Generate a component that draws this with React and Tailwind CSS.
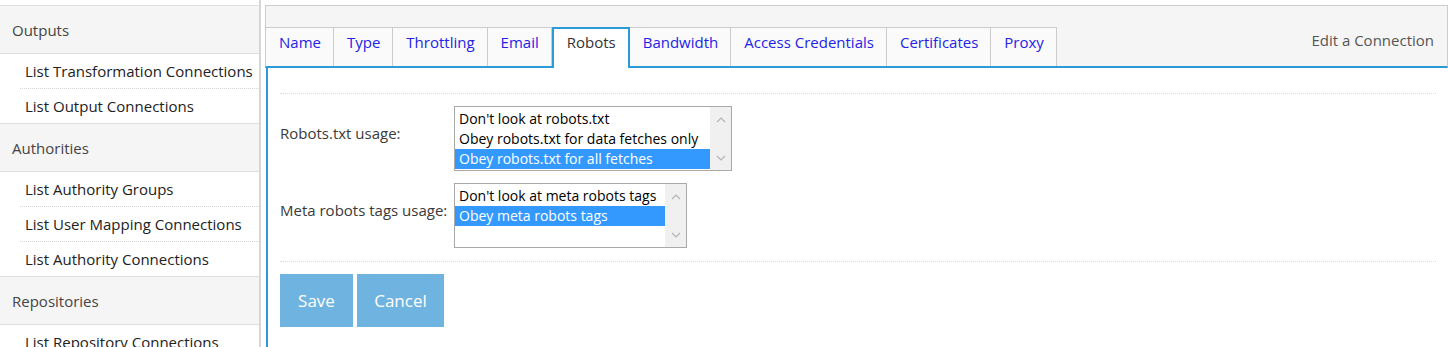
import React from "react";

const groups = [
  { title: "Outputs", items: ["List Transformation Connections", "List Output Connections"] },
  {
    title: "Authorities",
    items: ["List Authority Groups", "List User Mapping Connections", "List Authority Connections"],
  },
  { title: "Repositories", items: ["List Repository Connections"] },
];

const tabs = [
  "Name",
  "Type",
  "Throttling",
  "Email",
  "Robots",
  "Bandwidth",
  "Access Credentials",
  "Certificates",
  "Proxy",
];

function Chevron({ up }) {
  return (
    <svg width="10" height="6" viewBox="0 0 10 6" className="block">
      <polyline
        points={up ? "1,5 5,1 9,5" : "1,1 5,5 9,1"}
        fill="none"
        stroke="#b4b4b4"
        strokeWidth="1.2"
      />
    </svg>
  );
}

function ListBox({ width, options, selected }) {
  return (
    <div className={`flex h-[65px] border border-[#a9a9a9] bg-white ${width}`}>
      <div className="flex-1 pt-[2px]">
        {options.map((o, i) => (
          <div
            key={o}
            className={`h-[20px] pl-[4px] text-[14px] leading-[20px] whitespace-nowrap ${
              i === selected ? "bg-[#3399ff] text-white" : "text-black"
            }`}
          >
            {o}
          </div>
        ))}
      </div>
      <div className="w-[21px] bg-[#f0f0f0] flex flex-col items-center justify-between pt-[10px] pb-[9px]">
        <Chevron up />
        <Chevron />
      </div>
    </div>
  );
}

export default function App() {
  return (
    <div
      className="flex h-[347px] w-[1448px] overflow-hidden bg-white"
      style={{ fontFamily: '"Open Sans", sans-serif' }}
    >
      {/* Sidebar */}
      <aside className="w-[261px] shrink-0 pt-[5px] border-r-2 border-[#d6d6d6]">
        {groups.map((g) => (
          <div key={g.title}>
            <div className="h-[49px] border-y border-[#dedede] bg-[#f5f5f5] pl-[12px] pt-[1px] flex items-center text-[15px] text-[#444]">
              {g.title}
            </div>
            {g.items.map((it, i) => {
              const last = i === g.items.length - 1;
              return (
                <div
                  key={it}
                  className={`ml-[20px] pl-[5px] flex items-center text-[15px] text-[#222] whitespace-nowrap ${
                    last ? "h-[34px]" : "h-[35px] border-b border-dotted border-[#d4d4d4]"
                  }`}
                >
                  {it}
                </div>
              );
            })}
          </div>
        ))}
      </aside>

      {/* Main */}
      <main className="flex-1 ml-[4px] pt-[5px] flex flex-col">
        <div className="flex items-end border-t border-x border-[#cccccc] border-b-2 border-b-[#2b9bd8] bg-[#f5f5f5] pt-[21px]">
          {tabs.map((t) =>
            t === "Robots" ? (
              <div
                key={t}
                className="h-[41px] -mb-[2px] border-2 border-b-0 border-[#2b9bd8] bg-white pl-[13px] pr-[12px] pt-[3px] text-[15px] leading-[20px] text-[#333]"
              >
                {t}
              </div>
            ) : (
              <div
                key={t}
                className="h-[39px] border-t border-r border-[#cccccc] bg-[#fafafa] pl-[13px] pr-[12px] pt-[4px] text-[15px] leading-[20px] text-[#2323e8] whitespace-nowrap"
              >
                {t}
              </div>
            )
          )}
          <div className="ml-auto self-start mt-[3px] mr-[13px] text-[15px] leading-[20px] text-[#555]">
            Edit a Connection
          </div>
        </div>

        <div className="flex-1 ml-[1px] border-l-2 border-[#2b9bd8] pl-[12px] pr-[12px] pt-[25px]">
          <div className="border-t border-dotted border-[#dcdcdc] pt-[12px] pb-[13px]">
            <div className="grid grid-cols-[174px_auto] gap-y-[12px] items-center justify-start">
              <div className="text-[15px] text-[#3a3a3a] -mt-[11px]">Robots.txt usage:</div>
              <ListBox
                width="w-[278px]"
                options={[
                  "Don't look at robots.txt",
                  "Obey robots.txt for data fetches only",
                  "Obey robots.txt for all fetches",
                ]}
                selected={2}
              />
              <div className="text-[15px] text-[#3a3a3a] -mt-[11px]">Meta robots tags usage:</div>
              <ListBox
                width="w-[233px]"
                options={["Don't look at meta robots tags", "Obey meta robots tags"]}
                selected={1}
              />
            </div>
          </div>
          <div className="border-t border-dotted border-[#dcdcdc] pt-[12px] flex gap-[4px]">
            <button className="h-[53px] w-[73px] bg-[#6fb3e0] text-white text-[17px]">Save</button>
            <button className="h-[53px] w-[87px] bg-[#6fb3e0] text-white text-[17px]">Cancel</button>
          </div>
        </div>
      </main>
    </div>
  );
}
